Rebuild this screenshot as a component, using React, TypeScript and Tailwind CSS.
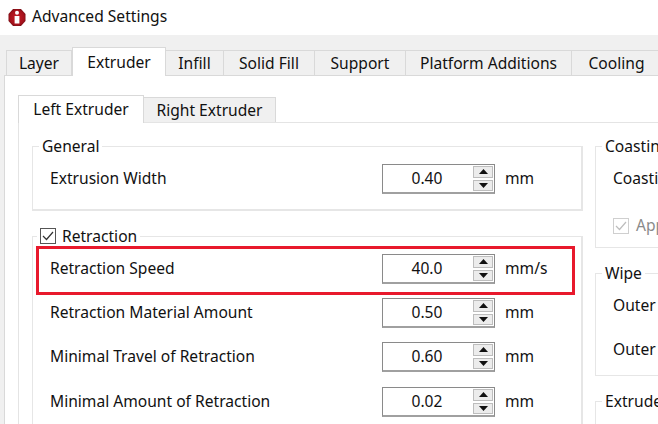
const font = { fontFamily: '"Noto Sans", "Open Sans", sans-serif' };

function Spin({ value }: { value: string }) {
  return (
    <div className="flex h-[30px] w-[113px] shrink-0 items-stretch border border-[#8a8a8a] border-b-2 border-b-[#a0a0a0] bg-white">
      <div className="flex flex-1 items-center justify-center pt-[1px] pr-[2px] text-[15.6px] text-[#111]">{value}</div>
      <div className="my-[1px] mr-[1px] flex w-[20px] flex-col gap-[2px]">
        <div className="flex flex-1 items-center justify-center border border-[#bdbdbd] bg-[#ececec]">
          <svg width="9" height="5" viewBox="0 0 9 5"><path d="M4.5 0 9 5H0z" fill="#111" /></svg>
        </div>
        <div className="flex flex-1 items-center justify-center border border-[#bdbdbd] bg-[#ececec]">
          <svg width="9" height="5" viewBox="0 0 9 5"><path d="M0 0h9L4.5 5z" fill="#111" /></svg>
        </div>
      </div>
    </div>
  );
}

function Row({ label, value, unit }: { label: string; value: string; unit: string }) {
  return (
    <div className="flex items-center">
      <div className="w-[349px] shrink-0 pl-[17px] text-[15.6px] text-[#111]">{label}</div>
      <Spin value={value} />
      <div className="pl-[10px] text-[15.6px] text-[#111]">{unit}</div>
    </div>
  );
}

function Legend({ children, className }: { children: React.ReactNode; className: string }) {
  return <div className={`absolute flex items-center gap-[6px] bg-white px-[3px] text-[15.6px] leading-[20px] text-[#111] ${className}`}>{children}</div>;
}

function Tab({ label, w, active }: { label: string; w: string; active?: boolean }) {
  return active ? (
    <div className={`relative z-10 -mb-[1px] flex h-[29px] shrink-0 items-center justify-center border border-b-0 border-[#d9d9d9] bg-white pt-[1px] text-[15.6px] text-[#111] ${w}`}>{label}</div>
  ) : (
    <div className={`flex h-[25px] shrink-0 items-center justify-center border-t border-r border-[#d9d9d9] bg-[#f0f0f0] pt-[2px] text-[15.6px] text-[#111] ${w}`}>{label}</div>
  );
}

export default function App() {
  return (
    <div className="flex h-[424px] w-[658px] flex-col overflow-hidden bg-white" style={font}>
      <div className="flex h-[35px] shrink-0 items-center gap-[6px] pb-[1px] pl-[8px] text-[15.6px] text-[#111]">
        <svg width="18" height="19" viewBox="0 0 18 19">
          <defs>
            <radialGradient id="hex" cx="50%" cy="50%" r="60%">
              <stop offset="0%" stopColor="#c81e28" />
              <stop offset="70%" stopColor="#a5121c" />
              <stop offset="100%" stopColor="#5e0a10" />
            </radialGradient>
          </defs>
          <path d="M5 1H13L17.5 6V13L13 18H5L0.5 13V6z" fill="url(#hex)" />
          <circle cx="9" cy="4.8" r="2" fill="#fff" />
          <path d="M6.6 8H11.4V15.5H6.6z" fill="#fff" />
        </svg>
        <span>Advanced Settings</span>
      </div>
      <div className="flex min-h-0 flex-1 flex-col bg-[#f0f0f0] pl-[4px]">
        <div className="flex h-[40px] shrink-0 items-end pl-[2px]">
          <div className="flex shrink-0 items-end border-l border-[#d9d9d9]">
            <Tab label="Layer" w="w-[65px]" />
          </div>
          <Tab label="Extruder" w="w-[94px]" active />
          <Tab label="Infill" w="w-[58px]" />
          <Tab label="Solid Fill" w="w-[91px]" />
          <Tab label="Support" w="w-[91px]" />
          <Tab label="Platform Additions" w="w-[166px]" />
          <Tab label="Cooling" w="w-[90px]" />
        </div>
        <div className="flex min-h-0 flex-1 flex-col border-t border-l border-[#d9d9d9] bg-white pt-[19px] pl-[13px]">
          <div className="flex h-[27px] shrink-0 items-end">
            <div className="relative z-10 -mb-[1px] flex h-[28px] w-[126px] shrink-0 items-center justify-center border border-b-0 border-[#d9d9d9] bg-white text-[15.6px] text-[#111]">Left Extruder</div>
            <div className="flex h-[25px] w-[132px] shrink-0 items-center justify-center border-t border-r border-[#d9d9d9] bg-[#f0f0f0] pt-[2px] text-[15.6px] text-[#111]">Right Extruder</div>
          </div>
          <div className="flex min-h-0 flex-1 gap-[12px] border-t border-l border-[#e4e4e4] pt-[23px] pl-[13px]">
            <div className="flex w-[551px] shrink-0 flex-col gap-[25px]">
              <div className="relative h-[65px] shrink-0 border-2 border-t border-l border-[#e6e6e6] pt-[17px]">
                <Legend className="-top-[11px] left-[6px]">General</Legend>
                <Row label="Extrusion Width" value="0.40" unit="mm" />
              </div>
              <div className="relative h-[220px] shrink-0 border-t border-r-2 border-l border-[#e6e6e6] pt-[9px]">
                <Legend className="-top-[11px] left-[4px]">
                  <span className="flex h-[16px] w-[16px] items-center justify-center border border-[#555]">
                    <svg width="12" height="10" viewBox="0 0 12 10"><path d="M1 5l3.5 3.5L11 1" fill="none" stroke="#333" strokeWidth="1.2" /></svg>
                  </span>
                  Retraction
                </Legend>
                <div className="ml-[3px] flex h-[49px] w-[539px] items-center border-[3px] border-[#e8192c]">
                  <div className="-ml-[6px] shrink-0 pb-[3px]">
                    <Row label="Retraction Speed" value="40.0" unit="mm/s" />
                  </div>
                </div>
                <div className="flex flex-col gap-[14px] pt-[3px]">
                  <Row label="Retraction Material Amount" value="0.50" unit="mm" />
                  <Row label="Minimal Travel of Retraction" value="0.60" unit="mm" />
                  <div className="pt-[1px]">
                    <Row label="Minimal Amount of Retraction" value="0.02" unit="mm" />
                  </div>
                </div>
              </div>
            </div>
            <div className="flex w-[200px] shrink-0 flex-col gap-[25px] whitespace-nowrap text-[15.6px] text-[#111]">
              <div className="relative h-[102px] shrink-0 border border-[#e6e6e6] pt-[20px] pl-[17px]">
                <Legend className="-top-[11px] left-[6px]">Coasting</Legend>
                <div>Coasting Volume</div>
                <div className="flex items-center gap-[7px] pt-[24px] text-[#8a8a8a]">
                  <span className="flex h-[16px] w-[16px] items-center justify-center border border-[#cfcfcf]">
                    <svg width="12" height="10" viewBox="0 0 12 10"><path d="M1 5l3.5 3.5L11 1" fill="none" stroke="#bdbdbd" strokeWidth="1.2" /></svg>
                  </span>
                  Apply
                </div>
              </div>
              <div className="relative h-[103px] shrink-0 border border-[#e6e6e6] pt-[20px] pl-[17px]">
                <Legend className="-top-[11px] left-[6px]">Wipe</Legend>
                <div>Outer Wall</div>
                <div className="pt-[21px]">Outer Wall</div>
              </div>
              <div className="relative h-[60px] shrink-0 border border-[#e6e6e6]">
                <Legend className="-top-[11px] left-[6px]">Extruder</Legend>
              </div>
            </div>
          </div>
        </div>
      </div>
    </div>
  );
}
